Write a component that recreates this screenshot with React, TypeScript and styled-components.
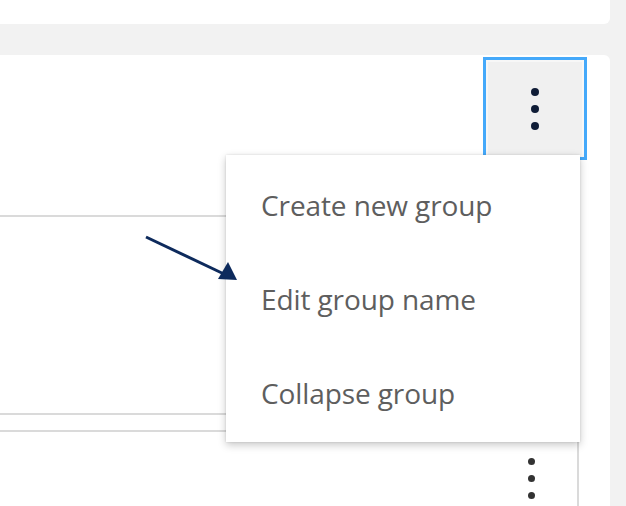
import React from "react";
import styled, { createGlobalStyle } from "styled-components";

const Global = createGlobalStyle`
  html, body { margin: 0; padding: 0; background: #f2f2f2; }
  body { font-family: "Open Sans", "Noto Sans", sans-serif; width: 626px; height: 506px; overflow: hidden; }
`;

const Page = styled.div`
  width: 626px;
  height: 506px;
  display: flex;
  flex-direction: column;
  gap: 31px;
  position: relative;
  overflow: hidden;
`;

const TopCard = styled.div`
  width: 610px;
  height: 24px;
  flex-shrink: 0;
  background: #ffffff;
  border-bottom-right-radius: 6px;
`;

const GroupCard = styled.div`
  width: 610px;
  flex: 1 0 auto;
  background: #ffffff;
  border-top-right-radius: 6px;
  position: relative;
  display: flex;
  flex-direction: column;
`;

const Header = styled.div`
  height: 160px;
  flex-shrink: 0;
  display: flex;
  justify-content: flex-end;
  align-items: flex-start;
  padding: 2px 23px 0 0;
  box-sizing: border-box;
`;

const KebabButton = styled.div`
  width: 104px;
  height: 103px;
  box-sizing: border-box;
  border: 3px solid #45a9fa;
  background: #f0f0f0;
  box-shadow: inset 0 0 0 2px #f7f7f7;
  display: flex;
  align-items: center;
  justify-content: center;
`;

const Dots = styled.div<{ $color: string; $size: number }>`
  display: flex;
  flex-direction: column;
  gap: ${(p) => 17 - p.$size}px;
  span {
    width: ${(p) => p.$size}px;
    height: ${(p) => p.$size}px;
    border-radius: 50%;
    background: ${(p) => p.$color};
  }
`;

const Row = styled.div<{ $h: number }>`
  width: 579px;
  height: ${(p) => p.$h}px;
  box-sizing: border-box;
  border-top: 2px solid #dadada;
  border-right: 2px solid #dadada;
  flex-shrink: 0;
`;

const RowGap = styled.div`
  height: 17px;
  width: 579px;
  flex-shrink: 0;
  border-top: 2px solid #dadada;
  box-sizing: border-box;
`;

const LastRow = styled(Row)`
  display: flex;
  justify-content: flex-end;
  padding: 26px 42px 0 0;
`;

const Menu = styled.div`
  position: absolute;
  left: 226px;
  top: 100px;
  width: 354px;
  padding: 3px 0 2px;
  background: #ffffff;
  box-shadow: 0 3px 8px rgba(0, 0, 0, 0.22), 0 0 2px rgba(0, 0, 0, 0.12);
  display: flex;
  flex-direction: column;
`;

const MenuItem = styled.div`
  height: 94px;
  display: flex;
  align-items: center;
  padding-left: 35px;
  font-size: 28px;
  color: #5e5e5e;
  letter-spacing: -0.1px;
`;

const ArrowSvg = styled.svg`
  position: absolute;
  left: 140px;
  top: 230px;
`;

const DotStack = ({ color, size }: { color: string; size: number }) => (
  <Dots $color={color} $size={size}>
    <span />
    <span />
    <span />
  </Dots>
);

export default function App() {
  return (
    <>
      <Global />
      <Page>
        <TopCard />
        <GroupCard>
          <Header>
            <KebabButton>
              <DotStack color="#0f1c36" size={8} />
            </KebabButton>
          </Header>
          <Row $h={198} />
          <RowGap />
          <LastRow $h={80}>
            <DotStack color="#333333" size={7} />
          </LastRow>
          <Menu>
            <MenuItem>Create new group</MenuItem>
            <MenuItem>Edit group name</MenuItem>
            <MenuItem>Collapse group</MenuItem>
          </Menu>
        </GroupCard>
        <ArrowSvg width="110" height="60" viewBox="0 0 110 60">
          <line x1="6" y1="7" x2="84" y2="44" stroke="#0d2a5c" strokeWidth="3" />
          <polygon points="97,50 78,49 88,32" fill="#0d2a5c" />
        </ArrowSvg>
      </Page>
    </>
  );
}
